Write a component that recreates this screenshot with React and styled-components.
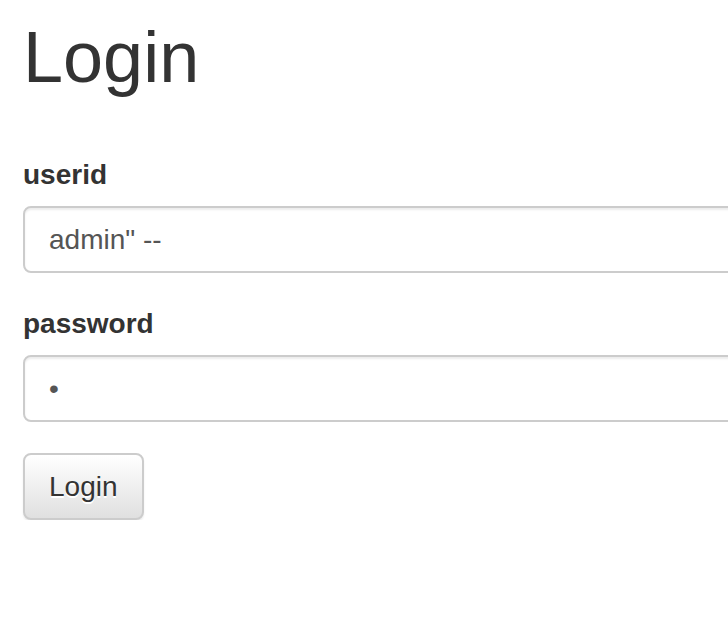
import React from 'react';
import styled, {createGlobalStyle} from "styled-components";

const GlobalStyle = createGlobalStyle`
  html, body{
    margin: 0;
    padding: 0;
    background: #fff;
    overflow: hidden;
  }
  body{
    font-family: "Liberation Sans", Arial, sans-serif;
    color: #333;
  }
`;

const App = () => {
    return (
        <>
        <GlobalStyle />
        <StyledPage>
            <StyledTitle>Login</StyledTitle>
            <form onSubmit={e => e.preventDefault()}>
                <StyledGroup>
                    <StyledLabel htmlFor="userid">userid</StyledLabel>
                    <StyledInput id="userid" type="text" defaultValue={'admin" --'} />
                </StyledGroup>
                <StyledGroup>
                    <StyledLabel htmlFor="password">password</StyledLabel>
                    <StyledInput id="password" type="password" defaultValue="a" />
                </StyledGroup>
                <StyledButton type="submit">Login</StyledButton>
            </form>
        </StyledPage>
        </>
    );
};

const StyledPage = styled.div`
  width: 1100px;
  padding: 18px 0 0 23px;
  box-sizing: border-box;
`;
const StyledTitle = styled.h1`
  margin: 0 0 58px;
  font-size: 72px;
  line-height: 79px;
  font-weight: 400;
  color: #333;
`;
const StyledGroup = styled.div`
  display: flex;
  flex-direction: column;
  margin-bottom: 31px;
`;
const StyledLabel = styled.label`
  font-size: 28px;
  line-height: 40px;
  font-weight: 700;
  margin-bottom: 11px;
  color: #333;
`;
const StyledInput = styled.input`
  box-sizing: border-box;
  width: 100%;
  height: 67px;
  padding: 12px 24px;
  font-family: "Liberation Sans", Arial, sans-serif;
  font-size: 28px;
  color: #555;
  background: #fff;
  border: 2px solid #ccc;
  border-radius: 8px;
  box-shadow: inset 0 2px 2px rgba(0,0,0,.075);
  outline: none;
`;
const StyledButton = styled.button`
  box-sizing: border-box;
  height: 67px;
  padding: 0 24px;
  font-family: "Liberation Sans", Arial, sans-serif;
  font-size: 28px;
  color: #333;
  background-image: linear-gradient(to bottom, #fff 0, #e0e0e0 100%);
  border: 2px solid #ccc;
  border-radius: 8px;
  text-shadow: 0 2px 0 #fff;
  box-shadow: inset 0 2px 0 rgba(255,255,255,.15), 0 2px 2px rgba(0,0,0,.075);
  cursor: pointer;
`;

export default App;
